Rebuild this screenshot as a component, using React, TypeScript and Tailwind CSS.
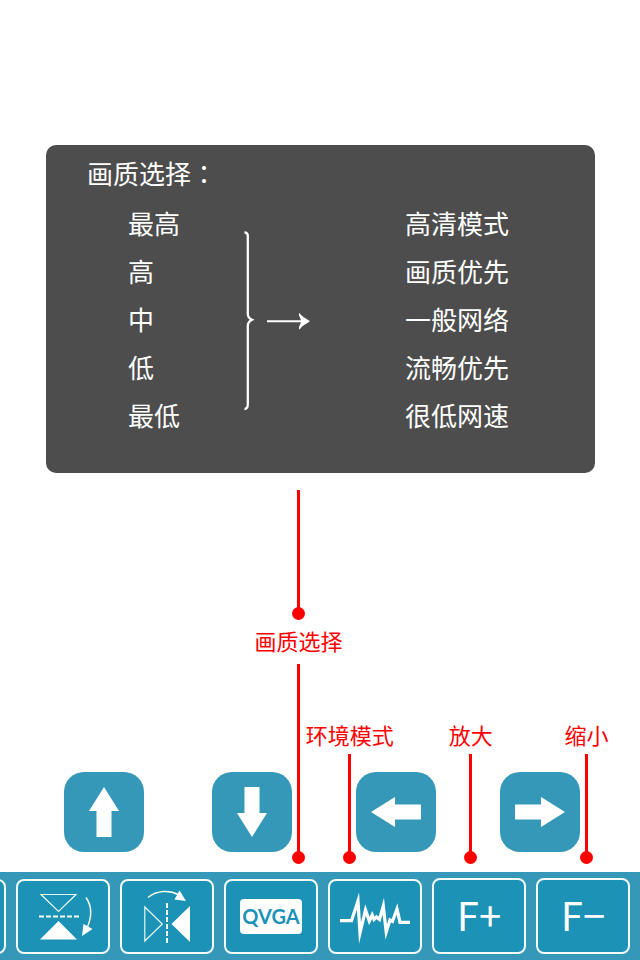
import type { ReactNode } from "react";

const qualities = ["最高", "高", "中", "低", "最低"];
const modes = ["高清模式", "画质优先", "一般网络", "流畅优先", "很低网速"];

const directions = [
  { label: "向上", turn: "" },
  { label: "向下", turn: "rotate-180" },
  { label: "向左", turn: "-rotate-90" },
  { label: "向右", turn: "rotate-90" },
];

function Dot() {
  return <span className="size-[13px] shrink-0 rounded-full bg-[#ff0000]" />;
}

function Callout({ label, place }: { label: string; place: string }) {
  return (
    <div className={`absolute bottom-2 flex w-[89px] flex-col items-center ${place}`}>
      <span className="whitespace-nowrap pb-1 text-[22px] leading-8">{label}</span>
      <span className="h-[101px] w-[3px] bg-[#ff0000]" />
      <span className="-mt-1 flex">
        <Dot />
      </span>
    </div>
  );
}

function ToolButton({
  label,
  tall = false,
  children,
}: {
  label: string;
  tall?: boolean;
  children?: ReactNode;
}) {
  return (
    <button
      type="button"
      aria-label={label}
      className={`flex min-w-0 flex-1 items-center justify-center rounded-lg border-2 border-[#f4fbf4] bg-[#1d92b7] text-white ${
        tall ? "h-[76px] pb-1" : "h-[75px]"
      }`}
    >
      {children}
    </button>
  );
}

function BraceArrow() {
  return (
    <svg width="66" height="180" viewBox="0 0 66 180" fill="none" className="mt-8" aria-hidden="true">
      <path
        d="M0.500 1.500C3 1.500 3.800 2.500 3.800 5V83C3.800 86 5.500 87.500 8 88.700C5.500 90 3.800 91.500 3.800 94.500V173C3.800 176.500 3 178 0.500 178"
        stroke="white"
        strokeWidth="2.300"
      />
      <path d="M23 90.300H58" stroke="white" strokeWidth="2" />
      <path d="M66 90.300C62 87.500 58 85.500 55.500 82C53.500 83.500 57 87 57 90.300C57 93.500 53.500 97 55.500 98.600C58 95 62 93 66 90.300Z" fill="white" />
    </svg>
  );
}

function FlipVerticalIcon() {
  return (
    <svg width="94" height="75" viewBox="0 0 94 75" fill="none" className="shrink-0" aria-hidden="true">
      <path d="M25 15.500H60L42.500 32.500Z" stroke="#e8f7ee" strokeWidth="1.200" />
      <path d="M24 60.500H61L42.500 42Z" fill="white" />
      <path d="M23 37.500H64" stroke="#f4fbe8" strokeWidth="2.200" strokeDasharray="5 2" />
      <path d="M70 18.500C76 27 76 37 71.500 48" stroke="#f4fbe8" strokeWidth="1.500" />
      <path d="M66 57L67.500 45L76.500 50Z" fill="white" />
    </svg>
  );
}

function FlipHorizontalIcon() {
  return (
    <svg width="94" height="75" viewBox="0 0 94 75" fill="none" className="shrink-0" aria-hidden="true">
      <path d="M24.800 28V62L42.300 45Z" stroke="#e8f7ee" strokeWidth="1.200" />
      <path d="M70 27V63L51.500 45Z" fill="white" />
      <path d="M47 24V65" stroke="#f4fbe8" strokeWidth="2" strokeDasharray="5 2" />
      <path d="M28 18.500C37 11 50 11 58 15.500" stroke="#f4fbe8" strokeWidth="1.500" />
      <path d="M66 22L54.500 20.500L59.500 11.500Z" fill="white" />
    </svg>
  );
}

function WaveIcon() {
  return (
    <svg width="94" height="75" viewBox="0 0 94 75" fill="none" className="shrink-0" aria-hidden="true">
      <path
        d="M12 41.700H23.500L30 22L32 54L37.500 31L41.300 42L44.200 36L46 40.500L48.500 38L51.500 40.500L55.300 27L58.200 53L62 41L64.500 42.500L69 30L72 43.300H82"
        stroke="white"
        strokeWidth="3.200"
        strokeMiterlimit="8"
      />
    </svg>
  );
}

export default function App() {
  return (
    <main className="overflow-hidden bg-white pt-[145px] font-['Noto_Sans_CJK_SC',sans-serif]">
      <section className="mr-[45px] ml-[46px] rounded-[10px] bg-[#4d4d4d] pt-1 pb-[34px] text-[26px] leading-[48px] text-white">
        <h1 className="mb-0.5 pl-[41px]">
          画质选择<span className="font-['Noto_Sans_CJK_JP',sans-serif]" lang="ja">：</span>
        </h1>
        <div className="grid grid-cols-[116fr_161fr_190fr] pl-[82px]">
          <ul>
            {qualities.map((item) => (
              <li key={item}>{item}</li>
            ))}
          </ul>
          <BraceArrow />
          <ul className="whitespace-nowrap">
            {modes.map((item) => (
              <li key={item}>{item}</li>
            ))}
          </ul>
        </div>
      </section>

      <section className="relative flex h-[399px] items-end pb-5 text-[#ff0000]">
        <div className="grid w-full grid-cols-[148fr_144fr_144fr_140fr] pl-16">
          {directions.map(({ label, turn }) => (
            <button
              key={label}
              type="button"
              aria-label={label}
              className="flex size-20 items-center justify-center rounded-[20px] bg-[#3698b8]"
            >
              <svg width="50" height="50" viewBox="0 0 50 50" className={turn} aria-hidden="true">
                <path d="M25 0L40 24H32.500V50H17.500V24H10Z" fill="white" />
              </svg>
            </button>
          ))}
        </div>

        <div className="absolute top-[17px] left-[39.7%] flex w-[89px] flex-col items-center">
          <span className="h-[121px] w-[3px] bg-[#ff0000]" />
          <span className="-mt-1 flex">
            <Dot />
          </span>
          <span className="mt-1 whitespace-nowrap text-[22px] leading-8">画质选择</span>
          <span className="mt-2 h-[191px] w-[3px] bg-[#ff0000]" />
          <span className="-mt-1 flex">
            <Dot />
          </span>
        </div>
        <Callout label="环境模式" place="left-[47.7%]" />
        <Callout label="放大" place="left-[66.6%]" />
        <Callout label="缩小" place="left-[84.7%]" />
      </section>

      <nav className="bg-[#3698b8] pt-1.5 pr-2.5 pb-1.5" aria-label="工具栏">
        <div className="-ml-[88px] flex items-end gap-2.5">
          <ToolButton label="更多" />
          <ToolButton label="垂直翻转">
            <FlipVerticalIcon />
          </ToolButton>
          <ToolButton label="水平翻转">
            <FlipHorizontalIcon />
          </ToolButton>
          <ToolButton label="画质选择">
            <span className="w-[62px] rounded bg-white text-center font-[Lato,sans-serif] text-[20px] leading-[35px] font-bold text-[#1d92b7]">
              QVGA
            </span>
          </ToolButton>
          <ToolButton label="环境模式">
            <WaveIcon />
          </ToolButton>
          <ToolButton label="放大" tall>
            <span className="text-[40px] leading-none">F+</span>
          </ToolButton>
          <ToolButton label="缩小" tall>
            <span className="text-[40px] leading-none">F−</span>
          </ToolButton>
        </div>
      </nav>
    </main>
  );
}
